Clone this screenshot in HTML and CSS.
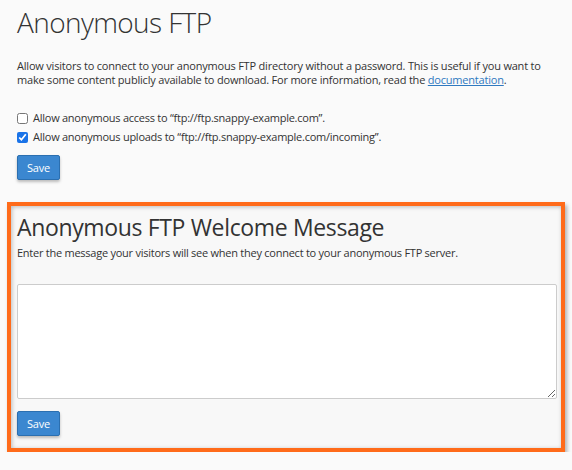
FILE: index.html
```html
<!DOCTYPE html>
<html lang="en">
<head>
<meta charset="utf-8">
<title>Anonymous FTP</title>
<link rel="stylesheet" href="styles.css">
</head>
<body>
<div class="page">
  <h1 class="title">Anonymous FTP</h1>
  <p class="intro">Allow visitors to connect to your anonymous FTP directory without a password. This is useful if you want to make some content publicly available to download. For more information, read the <a href="#" class="link">documentation</a>.</p>
  <div class="options">
    <label class="option"><input type="checkbox" class="check"> Allow anonymous access to “ftp://ftp.snappy-example.com”.</label>
    <label class="option"><input type="checkbox" class="check" checked> Allow anonymous uploads to “ftp://ftp.snappy-example.com/incoming”.</label>
  </div>
  <button class="btn">Save</button>

  <section class="welcome">
    <h2 class="subtitle">Anonymous FTP Welcome Message</h2>
    <p class="hint">Enter the message your visitors will see when they connect to your anonymous FTP server.</p>
    <textarea class="message"></textarea>
    <button class="btn">Save</button>
  </section>
</div>
</body>
</html>
```
FILE: styles.css
```css
html, body {
  margin: 0;
  padding: 0;
  background: #fafafa;
}
body {
  font-family: "Open Sans", "Liberation Sans", sans-serif;
  color: #333;
  font-size: 11px;
  letter-spacing: -0.25px;
}
.page {
  padding: 0 15px 0 17px;
}
.title {
  margin: 0;
  padding-top: 2px;
  font-size: 28px;
  font-weight: 300;
  letter-spacing: -0.6px;
  line-height: 40px;
  color: #333;
}
.intro {
  margin: 17px 0 0;
  line-height: 14px;
  letter-spacing: -0.2px;
}
.link {
  color: #2f79c0;
}
.options {
  margin-top: 24px;
  display: flex;
  flex-direction: column;
  gap: 5px;
}
.option {
  display: flex;
  align-items: center;
  gap: 5px;
  line-height: 14px;
}
.check {
  margin: 0;
  width: 11px;
  height: 11px;
  accent-color: #1a73e8;
}
.btn {
  display: block;
  margin-top: 11px;
  width: 43px;
  height: 25px;
  padding: 0;
  border: 1px solid #2b6fb0;
  border-radius: 2px;
  background: #3b87d0;
  color: #fff;
  font-family: "Open Sans", "Liberation Sans", sans-serif;
  font-size: 11px;
  letter-spacing: -0.25px;
  box-shadow: 0 2px 3px rgba(0,0,0,0.25);
}
.welcome {
  margin: 22px 0 0 -10px;
  width: 558px;
  box-sizing: border-box;
  border: 4px solid #ff6b1a;
  padding: 5px 4px 12px 6px;
  background: #f8f8f8;
  box-shadow: 2px 3px 4px rgba(0,0,0,0.3), inset 1px 1px 4px rgba(0,0,0,0.25);
}
.subtitle {
  margin: 0;
  font-size: 23px;
  font-weight: 400;
  letter-spacing: -0.35px;
  line-height: 32px;
  color: #333;
}
.hint {
  margin: 3px 0 0;
  line-height: 14px;
}
.message {
  display: block;
  margin-top: 24px;
  width: 540px;
  height: 115px;
  box-sizing: border-box;
  border: 1px solid #ccc;
  border-radius: 2px;
  background: #fff;
}
.welcome .btn {
  margin-top: 12px;
}
```
